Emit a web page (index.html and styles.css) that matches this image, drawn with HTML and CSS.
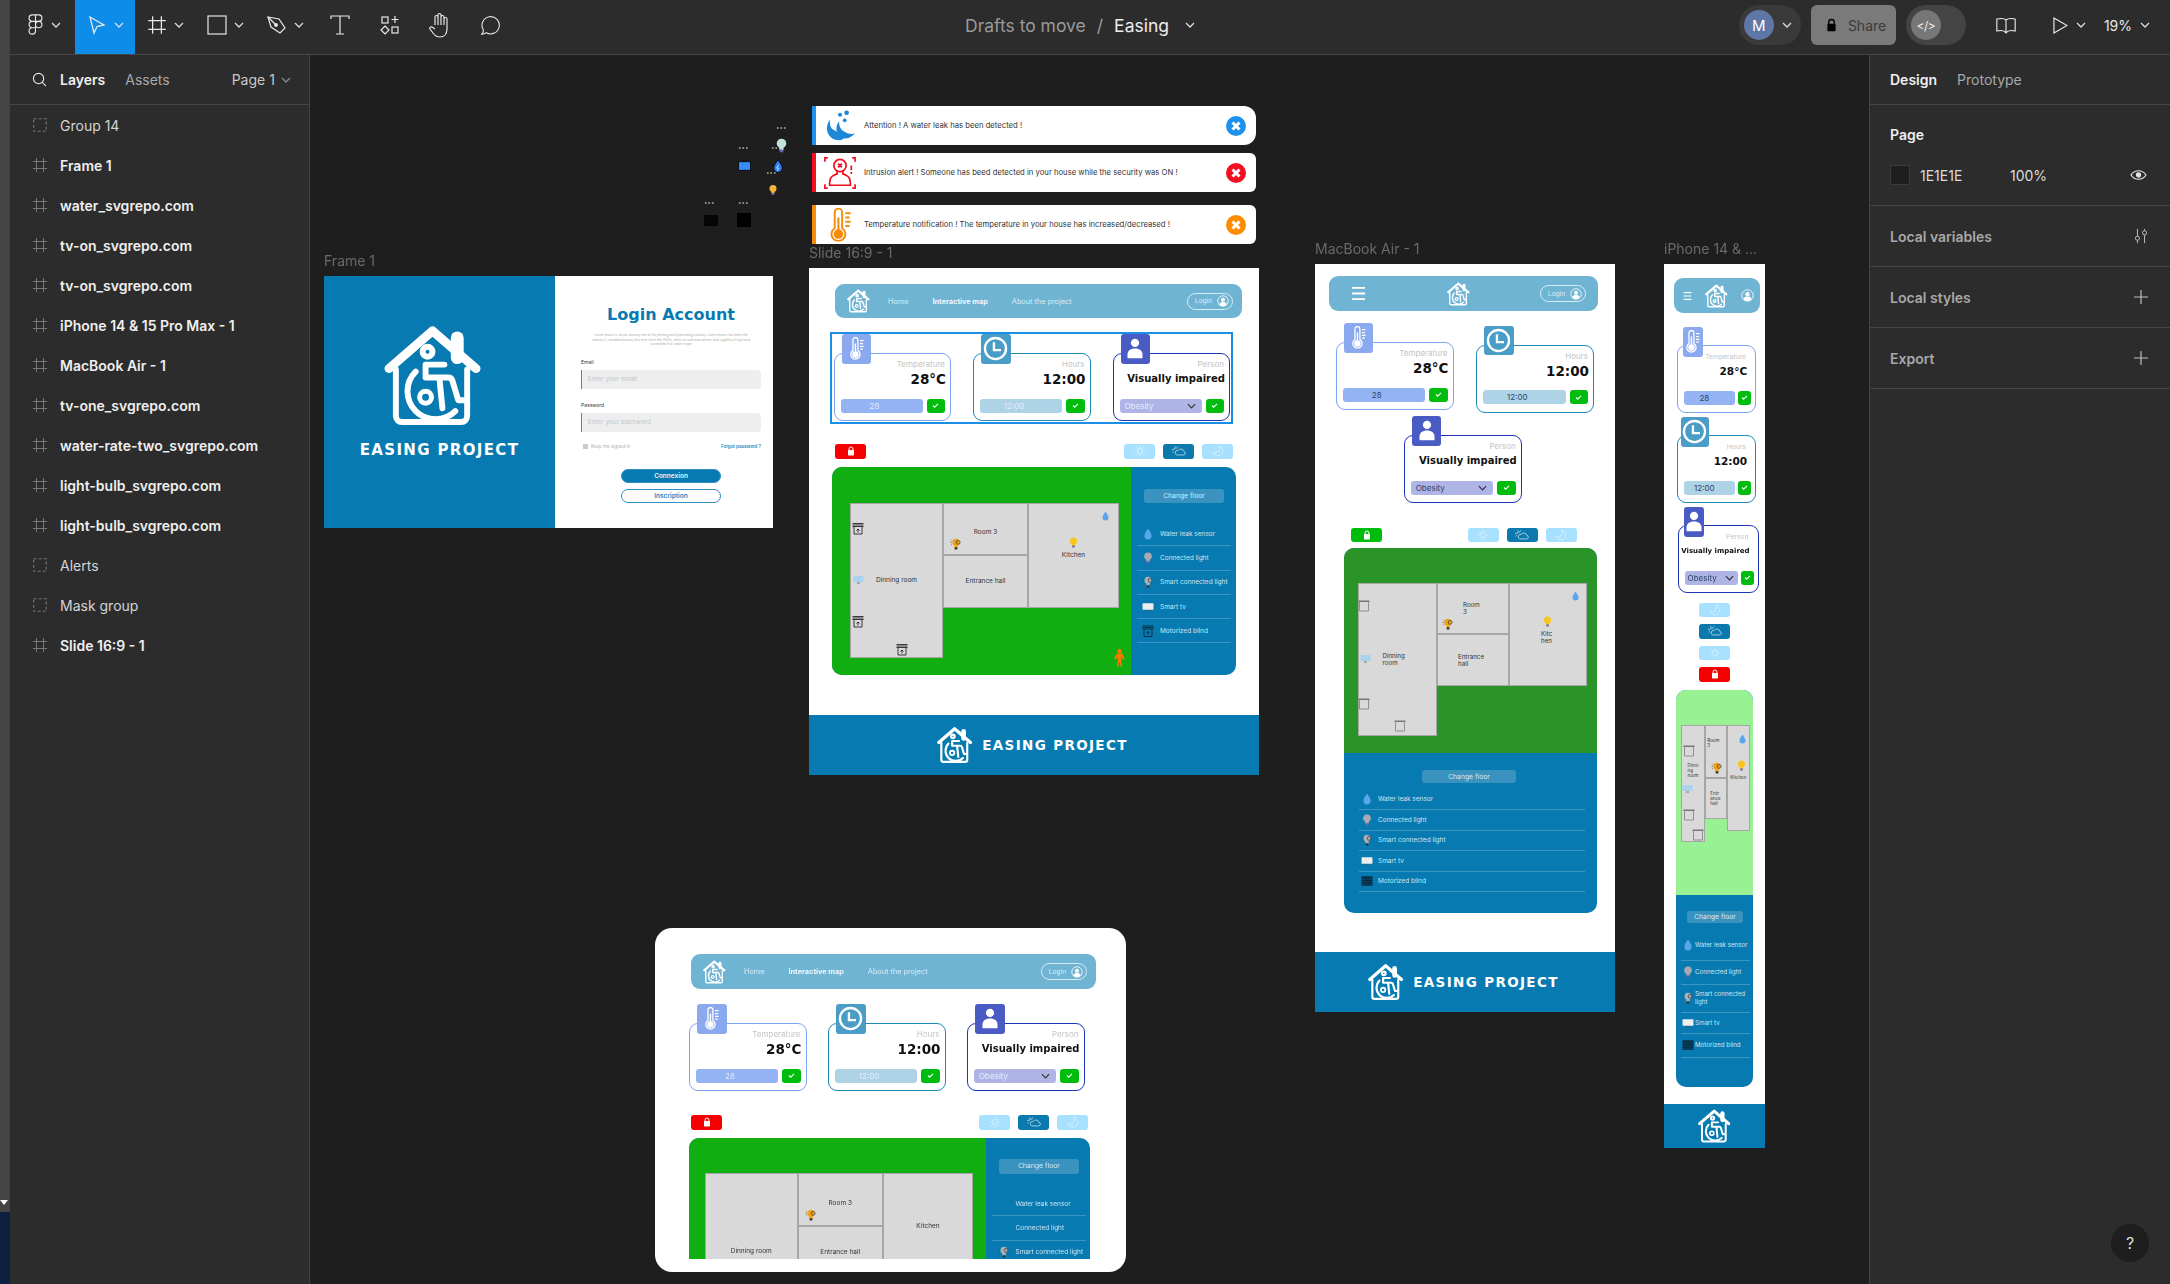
FILE: index.html
```html
<!DOCTYPE html>
<html lang="en">
  <head>
    <meta charset="UTF-8" />
    <title>Easing - Figma</title>
    <link rel="stylesheet" href="styles.css" />
  </head>
  <body>
    <!-- shared icons -->
    <svg class="sprite" aria-hidden="true">
      <symbol id="house" viewBox="0 0 100 100">
        <g fill="none" stroke="currentColor" stroke-linecap="round" stroke-linejoin="round">
          <path d="M5 43 49 5l44 38" stroke-width="9" />
          <path d="M74 12v20" stroke-width="13" />
          <path d="M12 44v47a6 6 0 0 0 6 6h60a6 6 0 0 0 6-6V44" stroke-width="6" />
          <circle cx="44" cy="26" r="5" stroke-width="6" />
          <path d="M42 39h19M42 39v13h23q3 0 4 3l6 20h6M56 53l3 30" stroke-width="6" />
          <path d="M32 46a26 26 0 0 0 40 40" stroke-width="6" />
          <circle cx="42" cy="72" r="6" stroke-width="5" />
        </g>
      </symbol>
      <symbol id="thermo" viewBox="0 0 24 32">
        <g fill="none" stroke="currentColor" stroke-width="1.8">
          <path d="M7 4a3.5 3.5 0 0 1 7 0v15a6.5 6.5 0 1 1-7 0z" />
          <path d="M17 5h5M17 9h4M17 13h5M17 17h4" />
        </g>
        <circle cx="10.5" cy="24.5" r="4.5" fill="currentColor" />
        <path d="M10.5 9v14" stroke="currentColor" stroke-width="2" />
      </symbol>
      <symbol id="clock" viewBox="0 0 32 32">
        <circle cx="16" cy="16" r="13.5" fill="none" stroke="currentColor" stroke-width="3" />
        <path d="M14 8v10h9" fill="none" stroke="currentColor" stroke-width="3" />
      </symbol>
      <symbol id="person" viewBox="0 0 24 28">
        <circle cx="12" cy="6.5" r="5.5" fill="currentColor" />
        <path d="M2 27v-5c0-5 4-8 10-8s10 3 10 8v5z" fill="currentColor" />
      </symbol>
      <symbol id="check" viewBox="0 0 16 16">
        <path d="m3.5 8 3 3 6-6" fill="none" stroke="currentColor" stroke-width="2" />
      </symbol>
      <symbol id="padlock" viewBox="0 0 16 20">
        <path d="M4 9V6a4 4 0 0 1 8 0v3" fill="none" stroke="currentColor" stroke-width="2" />
        <rect x="2" y="8" width="12" height="11" rx="1.5" fill="currentColor" />
      </symbol>
      <symbol id="sun" viewBox="0 0 24 24">
        <g fill="none" stroke="currentColor" stroke-width="1.3">
          <circle cx="12" cy="12" r="5" />
          <path d="M12 1v4M12 19v4M1 12h4M19 12h4M4 4l3 3M17 17l3 3M4 20l3-3M17 7l3-3" />
        </g>
      </symbol>
      <symbol id="cloud" viewBox="0 0 32 24">
        <g fill="none" stroke="currentColor" stroke-width="1.4">
          <path d="M11 21h15a4 4 0 0 0 1-8 7 7 0 0 0-13-2 5 5 0 0 0-3 10z" />
          <path d="M4 10a5 5 0 0 1 8-4M6 1l1 3M0 8l3 1M14 1l-2 3M1 15l3-2" />
        </g>
      </symbol>
      <symbol id="moon" viewBox="0 0 24 24">
        <path d="M14 2a10 10 0 1 1-12 13c7 3 16-3 12-13z" fill="none" stroke="currentColor" stroke-width="1.3" />
      </symbol>
      <symbol id="drop" viewBox="0 0 14 20">
        <path d="M7 1c3 5 6 8 6 12a6 6 0 0 1-12 0c0-4 3-7 6-12z" fill="currentColor" />
      </symbol>
      <symbol id="bulb" viewBox="0 0 16 22">
        <circle cx="8" cy="8" r="7" fill="currentColor" />
        <rect x="5" y="13" width="6" height="5" fill="currentColor" />
        <rect x="5.5" y="17" width="5" height="4" fill="#6a64b0" />
      </symbol>
      <symbol id="smartbulb" viewBox="0 0 22 22">
        <circle cx="11" cy="8" r="6.5" fill="currentColor" />
        <rect x="8" y="13" width="6" height="5" fill="currentColor" />
        <rect x="8.5" y="17" width="5" height="4" fill="#333" />
        <circle cx="15" cy="8" r="3.5" fill="none" stroke="#444" stroke-width="1.5" />
        <path d="M1 8h3M2 3l2 2M2 13l2-2" stroke="#444" />
      </symbol>
      <symbol id="screen" viewBox="0 0 22 16">
        <rect x="1" y="1" width="20" height="12" rx="1" fill="currentColor" />
        <path d="M8 15h6" stroke="#555" stroke-width="1.5" />
      </symbol>
      <symbol id="blind" viewBox="0 0 24 24">
        <g fill="none" stroke="currentColor">
          <path d="M1 2h22M1 5h22M1 8h22" stroke-width="1.6" />
          <path d="M4 8v15h16V8" stroke-width="1.6" />
          <path d="M12 20v-7M9 16l3-3 3 3" stroke-width="1.6" />
        </g>
      </symbol>
      <symbol id="blindshut" viewBox="0 0 24 24">
        <rect x="1" y="2" width="22" height="20" fill="#0a3e5e" />
        <path d="M1 6h22M1 11h22M1 16h22" stroke="#052536" stroke-width="1.5" />
      </symbol>
      <symbol id="blindempty" viewBox="0 0 24 24">
        <path d="M1 2h22v3H1z" fill="currentColor" />
        <path d="M3 5v18h18V5" fill="none" stroke="currentColor" stroke-width="1.5" />
      </symbol>
      <symbol id="walker" viewBox="0 0 12 20">
        <circle cx="6" cy="2.5" r="2.5" fill="currentColor" />
        <path d="M3 5h6l3 6-1.5 1L8 9v4l1 7H7.5L6 14l-1.5 6H3l1-7V9l-2.5 3L0 11z" fill="currentColor" />
      </symbol>
      <symbol id="userround" viewBox="0 0 24 24">
        <circle cx="12" cy="12" r="10.5" fill="none" stroke="currentColor" stroke-width="1.6" />
        <circle cx="12" cy="9.5" r="4" fill="currentColor" />
        <path d="M4.5 19c1-4 4-5 7.5-5s6.5 1 7.5 5c-4 4-11 4-15 0z" fill="currentColor" />
      </symbol>
      <symbol id="burger" viewBox="0 0 16 16">
        <path d="M1 2h14M1 8h14M1 14h14" stroke="currentColor" stroke-width="2" />
      </symbol>
      <symbol id="chev" viewBox="0 0 10 6">
        <path d="m1 1 4 4 4-4" fill="none" stroke="currentColor" stroke-width="1.3" />
      </symbol>
      <symbol id="framegrid" viewBox="0 0 16 16">
        <path d="M4.5 1v14M11.5 1v14M1 4.5h14M1 11.5h14" stroke="currentColor" />
      </symbol>
      <symbol id="groupdash" viewBox="0 0 14 14">
        <path d="M1.5 1.5h11v11h-11z" fill="none" stroke="currentColor" stroke-dasharray="2.5 2" />
      </symbol>
      <symbol id="plus" viewBox="0 0 16 16">
        <path d="M8 1v14M1 8h14" stroke="currentColor" stroke-width="1.2" />
      </symbol>
      <symbol id="xmark" viewBox="0 0 20 20">
        <circle cx="10" cy="10" r="10" fill="currentColor" />
        <path d="m6.5 6.5 7 7M13.5 6.5l-7 7" stroke="#fff" stroke-width="3" />
      </symbol>
    </svg>

    <div class="edge"><span class="edge__arrow"></span></div>

    <div class="app">
      <header class="toolbar">
        <div class="tools">
          <button class="tool tool--logo">
            <svg class="tool__icon tool__icon--logo" viewBox="0 0 16 24" fill="none" stroke="currentColor" stroke-width="1.2">
              <path d="M8 1H4.500a3.500 3.500 0 0 0 0 7H8zM8 1h3.500a3.500 3.500 0 0 1 0 7H8zM8 8H4.500a3.500 3.500 0 0 0 0 7H8zM8 15H4.500A3.500 3.500 0 1 0 8 18.500z" />
              <circle cx="11.5" cy="11.5" r="3.5" />
            </svg>
            <svg class="chev"><use href="#chev" /></svg>
          </button>
          <button class="tool tool--wide tool--active">
            <svg class="tool__icon" viewBox="0 0 20 20" fill="none" stroke="currentColor" stroke-width="1.3">
              <path d="m3 2 14 8-7 1.500L7 18z" />
            </svg>
            <svg class="chev"><use href="#chev" /></svg>
          </button>
          <button class="tool tool--wide">
            <svg class="tool__icon"><use href="#framegrid" /></svg>
            <svg class="chev"><use href="#chev" /></svg>
          </button>
          <button class="tool tool--wide">
            <svg class="tool__icon" viewBox="0 0 20 20" fill="none" stroke="currentColor" stroke-width="1.2"><rect x="1" y="1" width="18" height="18" /></svg>
            <svg class="chev"><use href="#chev" /></svg>
          </button>
          <button class="tool tool--wide">
            <svg class="tool__icon" viewBox="0 0 20 20" fill="none" stroke="currentColor" stroke-width="1.2">
              <path d="m1 2 11 2 6 9-5 5-9-6z" /><path d="m1 2 7 7" /><circle cx="9" cy="10" r="1.3" fill="currentColor" />
            </svg>
            <svg class="chev"><use href="#chev" /></svg>
          </button>
          <button class="tool">
            <svg class="tool__icon" viewBox="0 0 20 20" fill="none" stroke="currentColor" stroke-width="1.2"><path d="M1 4V1h18v3M10 1v18M6 19h8" /></svg>
          </button>
          <button class="tool">
            <svg class="tool__icon" viewBox="0 0 20 20" fill="none" stroke="currentColor" stroke-width="1.2">
              <rect x="2" y="2" width="6" height="6" /><path d="M15 1v7M11.5 4.500h7" />
              <rect x="12" y="12" width="6" height="6" /><path d="m5 11 4 4-4 4-4-4z" />
            </svg>
          </button>
          <button class="tool">
            <svg class="tool__icon tool__icon--hand" viewBox="0 0 22 26" fill="none" stroke="currentColor" stroke-width="1.2">
              <path d="M6 13V5a1.500 1.500 0 0 1 3 0V3a1.500 1.500 0 0 1 3 0v2a1.500 1.500 0 0 1 3 0v2a1.500 1.500 0 0 1 3 0v10c0 5-3 8-7 8-3 0-5-1-7-4l-3-4a1.500 1.500 0 0 1 2-2l3 2M9 5v8M12 3v10M15 5v8" />
            </svg>
          </button>
          <button class="tool">
            <svg class="tool__icon" viewBox="0 0 22 22" fill="none" stroke="currentColor" stroke-width="1.2">
              <path d="M2 21c1-1 2-3 1.500-5A9.500 9.500 0 1 1 7 19.500c-1.500.5-3 1.500-5 1.500z" />
            </svg>
          </button>
        </div>

        <div class="crumbs">
          <span class="crumbs__folder">Drafts to move</span>
          <span class="crumbs__slash">/</span>
          <span class="crumbs__file">Easing</span>
          <svg class="chev"><use href="#chev" /></svg>
        </div>

        <div class="actions">
          <div class="pill">
            <span class="avatar">M</span>
            <svg class="chev"><use href="#chev" /></svg>
          </div>
          <div class="share">
            <svg class="share__lock"><use href="#padlock" /></svg>
            <span>Share</span>
          </div>
          <div class="pill pill--dev">
            <span class="dev-dot">&lt;/&gt;</span>
          </div>
          <svg class="action-icon action-icon--book" viewBox="0 0 24 18" fill="none" stroke="currentColor" stroke-width="1.2">
            <path d="M12 3c-2-2-6-2-10-1v13c4-1 8-1 10 2 2-3 6-3 10-2V2c-4-1-8-1-10 1zv14" />
          </svg>
          <svg class="action-icon action-icon--play" viewBox="0 0 16 18" fill="none" stroke="currentColor" stroke-width="1.2">
            <path d="M1 1v16l14-8z" />
          </svg>
          <svg class="chev chev--play"><use href="#chev" /></svg>
          <span class="zoom-level">19%</span>
          <svg class="chev"><use href="#chev" /></svg>
        </div>
      </header>

      <div class="workspace">
        <aside class="layers">
          <div class="layers__head">
            <svg class="layers__search" viewBox="0 0 16 16" fill="none" stroke="currentColor" stroke-width="1.2">
              <circle cx="7" cy="7" r="5.5" /><path d="m11 11 4 4" />
            </svg>
            <span class="layers__tab layers__tab--on">Layers</span>
            <span class="layers__tab">Assets</span>
            <span class="layers__page">Page 1</span>
            <svg class="chev chev--dim"><use href="#chev" /></svg>
          </div>
          <ul class="layers__list">
            <li class="layer"><svg class="layer__icon"><use href="#groupdash" /></svg>Group 14</li>
            <li class="layer layer--frame"><svg class="layer__icon"><use href="#framegrid" /></svg>Frame 1</li>
            <li class="layer layer--frame"><svg class="layer__icon"><use href="#framegrid" /></svg>water_svgrepo.com</li>
            <li class="layer layer--frame"><svg class="layer__icon"><use href="#framegrid" /></svg>tv-on_svgrepo.com</li>
            <li class="layer layer--frame"><svg class="layer__icon"><use href="#framegrid" /></svg>tv-on_svgrepo.com</li>
            <li class="layer layer--frame"><svg class="layer__icon"><use href="#framegrid" /></svg>iPhone 14 &amp; 15 Pro Max - 1</li>
            <li class="layer layer--frame"><svg class="layer__icon"><use href="#framegrid" /></svg>MacBook Air - 1</li>
            <li class="layer layer--frame"><svg class="layer__icon"><use href="#framegrid" /></svg>tv-one_svgrepo.com</li>
            <li class="layer layer--frame"><svg class="layer__icon"><use href="#framegrid" /></svg>water-rate-two_svgrepo.com</li>
            <li class="layer layer--frame"><svg class="layer__icon"><use href="#framegrid" /></svg>light-bulb_svgrepo.com</li>
            <li class="layer layer--frame"><svg class="layer__icon"><use href="#framegrid" /></svg>light-bulb_svgrepo.com</li>
            <li class="layer"><svg class="layer__icon"><use href="#groupdash" /></svg>Alerts</li>
            <li class="layer"><svg class="layer__icon"><use href="#groupdash" /></svg>Mask group</li>
            <li class="layer layer--frame"><svg class="layer__icon"><use href="#framegrid" /></svg>Slide 16:9 - 1</li>
          </ul>
        </aside>

        <main class="canvas">
          <!-- stray svgrepo frames -->
          <span class="stray-dots stray-dots--a"></span>
          <span class="stray-dots stray-dots--b"></span>
          <span class="stray-dots stray-dots--c"></span>
          <span class="stray-dots stray-dots--d"></span>
          <span class="stray-dots stray-dots--e"></span>
          <span class="stray-dots stray-dots--f"></span>
          <svg class="stray stray--lightbulb"><use href="#bulb" /></svg>
          <svg class="stray stray--tv" viewBox="0 0 16 14">
            <path d="M4 0l4 3 3-3" fill="none" stroke="#000" />
            <rect x="0.5" y="3" width="15" height="10.5" fill="#3a8cf0" stroke="#000" />
          </svg>
          <svg class="stray stray--drop" viewBox="0 0 14 20">
            <path d="M7 1c3 5 6 8 6 12a6 6 0 0 1-12 0c0-4 3-7 6-12z" fill="#2f7df0" stroke="#000" />
            <path d="M8 8 5 13h3l-2 4" fill="none" stroke="#fff" />
          </svg>
          <svg class="stray stray--bulb"><use href="#bulb" /></svg>
          <span class="stray stray--tvoff"></span>
          <span class="stray stray--black"></span>

          <section class="frame frame--login">
            <p class="frame-label">Frame 1</p>
            <div class="login__brand">
              <svg class="login__logo"><use href="#house" /></svg>
              <p class="login__name">EASING PROJECT</p>
            </div>
            <form class="login__form">
              <h1 class="login__title">Login Account</h1>
              <p class="login__lorem">Lorem Ipsum is simply dummy text of the printing and typesetting industry. Lorem Ipsum has been the industry's standard dummy text ever since the 1500s, when an unknown printer took a galley of type and scrambled it to make a type</p>
              <label class="login__label">Email</label>
              <div class="login__input">Enter your email</div>
              <label class="login__label login__label--second">Password</label>
              <div class="login__input">Enter your password</div>
              <div class="login__meta">
                <span class="login__box"></span>
                <span class="login__keep">Keep me signed in</span>
                <span class="login__forgot">Forgot password ?</span>
              </div>
              <div class="login__btn login__btn--main">Connexion</div>
              <div class="login__btn">Inscription</div>
            </form>
          </section>

          <section class="alerts">
            <div class="alert alert--water">
              <svg class="alert__icon" viewBox="0 0 34 34">
                <path d="M14 32C4 30 0 20 6 10c0 8 2 10 6 12 4 3 8 5 14 4-4 4-8 7-12 6z" fill="#1e88d8" />
                <path d="M22 30c-8-2-12-10-6-18 0 7 3 10 6 11 3 2 7 3 11 2-3 3-7 6-11 5z" fill="#1e88d8" />
                <circle cx="17" cy="5" r="2.2" fill="#1e88d8" /><circle cx="24" cy="3" r="2.5" fill="#1e88d8" /><circle cx="22" cy="11" r="2" fill="#1e88d8" />
              </svg>
              <p class="alert__text">Attention ! A water leak has been detected !</p>
              <svg class="alert__close"><use href="#xmark" /></svg>
            </div>
            <div class="alert alert--intrusion">
              <svg class="alert__icon" viewBox="0 0 34 34" fill="none" stroke="#f00d1d" stroke-width="1.8">
                <path d="M1 5V1h3M33 5V1h-3M1 29v4h3M33 29v4h-3M29 9v5M29 16v2" />
                <circle cx="17" cy="9" r="6.5" />
                <path d="M14 14v4c-3 1-8 2-8 9v3h22v-3c0-7-5-8-8-9v-4" />
                <path d="m15 7 4 4M19 7l-4 4" />
              </svg>
              <p class="alert__text">Intrusion alert ! Someone has beed detected in your house while the security was ON !</p>
              <svg class="alert__close"><use href="#xmark" /></svg>
            </div>
            <div class="alert alert--heat">
              <svg class="alert__icon"><use href="#thermo" /></svg>
              <p class="alert__text">Temperature notification ! The temperature in your house has increased/decreased !</p>
              <svg class="alert__close"><use href="#xmark" /></svg>
            </div>
          </section>

          <!-- desktop slide -->
          <section class="frame frame--slide">
            <p class="frame-label">Slide 16:9 - 1</p>
            <nav class="app-nav">
              <svg class="app-nav__logo"><use href="#house" /></svg>
              <a class="app-nav__link">Home</a>
              <a class="app-nav__link app-nav__link--on">Interactive map</a>
              <a class="app-nav__link">About the project</a>
              <span class="login-pill">Login <svg class="login-pill__icon"><use href="#userround" /></svg></span>
            </nav>
            <div class="stats stats--selected">
              <article class="stat stat--temp">
                <span class="stat__badge"><svg class="stat__glyph stat__glyph--thermo"><use href="#thermo" /></svg></span>
                <p class="stat__label">Temperature</p>
                <p class="stat__value">28°C</p>
                <div class="stat__form"><span class="stat__field">28</span><span class="stat__ok"><svg><use href="#check" /></svg></span></div>
              </article>
              <article class="stat stat--time">
                <span class="stat__badge"><svg class="stat__glyph"><use href="#clock" /></svg></span>
                <p class="stat__label">Hours</p>
                <p class="stat__value">12:00</p>
                <div class="stat__form"><span class="stat__field">12:00</span><span class="stat__ok"><svg><use href="#check" /></svg></span></div>
              </article>
              <article class="stat stat--person">
                <span class="stat__badge"><svg class="stat__glyph stat__glyph--person"><use href="#person" /></svg></span>
                <p class="stat__label">Person</p>
                <p class="stat__value stat__value--text">Visually impaired</p>
                <div class="stat__form"><span class="stat__field stat__field--select">Obesity<svg class="chev"><use href="#chev" /></svg></span><span class="stat__ok"><svg><use href="#check" /></svg></span></div>
              </article>
            </div>
            <div class="controls">
              <span class="lock lock--on"><svg><use href="#padlock" /></svg></span>
              <div class="modes">
                <span class="mode"><svg><use href="#sun" /></svg></span>
                <span class="mode mode--on"><svg><use href="#cloud" /></svg></span>
                <span class="mode"><svg><use href="#moon" /></svg></span>
              </div>
            </div>
            <div class="house">
              <div class="yard">
                <div class="plan">
                  <div class="room room--dining"><span class="room__name">Dinning room</span></div>
                  <div class="room room--three"><span class="room__name">Room 3</span></div>
                  <div class="room room--hall"><span class="room__name">Entrance hall</span></div>
                  <div class="room room--kitchen"><span class="room__name">Kitchen</span></div>
                </div>
                <svg class="pin pin--blind pin--blind-a"><use href="#blind" /></svg>
                <svg class="pin pin--blind pin--blind-b"><use href="#blind" /></svg>
                <svg class="pin pin--blind pin--blind-c"><use href="#blind" /></svg>
                <svg class="pin pin--tv"><use href="#screen" /></svg>
                <svg class="pin pin--spot"><use href="#smartbulb" /></svg>
                <svg class="pin pin--bulb"><use href="#bulb" /></svg>
                <svg class="pin pin--drop"><use href="#drop" /></svg>
                <svg class="pin pin--walker"><use href="#walker" /></svg>
              </div>
              <aside class="legend">
                <span class="legend__floor">Change floor</span>
                <ul class="legend__list">
                  <li class="legend__item"><span class="legend__slot legend__slot--drop"><svg><use href="#drop" /></svg></span>Water leak sensor</li>
                  <li class="legend__item"><span class="legend__slot legend__slot--bulb"><svg><use href="#bulb" /></svg></span>Connected light</li>
                  <li class="legend__item"><span class="legend__slot legend__slot--spot"><svg><use href="#smartbulb" /></svg></span>Smart connected light</li>
                  <li class="legend__item"><span class="legend__slot legend__slot--tv"><svg><use href="#screen" /></svg></span>Smart tv</li>
                  <li class="legend__item"><span class="legend__slot legend__slot--blind"><svg><use href="#blind" /></svg></span>Motorized blind</li>
                </ul>
              </aside>
            </div>
            <footer class="brand">
              <svg class="brand__logo"><use href="#house" /></svg>
              <span class="brand__name">EASING PROJECT</span>
            </footer>
          </section>

          <!-- macbook -->
          <section class="frame frame--mac">
            <p class="frame-label">MacBook Air - 1</p>
            <nav class="app-nav">
              <svg class="app-nav__burger"><use href="#burger" /></svg>
              <svg class="app-nav__logo"><use href="#house" /></svg>
              <span class="login-pill">Login <svg class="login-pill__icon"><use href="#userround" /></svg></span>
            </nav>
            <div class="stats">
              <article class="stat stat--temp">
                <span class="stat__badge"><svg class="stat__glyph stat__glyph--thermo"><use href="#thermo" /></svg></span>
                <p class="stat__label">Temperature</p>
                <p class="stat__value">28°C</p>
                <div class="stat__form"><span class="stat__field">28</span><span class="stat__ok"><svg><use href="#check" /></svg></span></div>
              </article>
              <article class="stat stat--time">
                <span class="stat__badge"><svg class="stat__glyph"><use href="#clock" /></svg></span>
                <p class="stat__label">Hours</p>
                <p class="stat__value">12:00</p>
                <div class="stat__form"><span class="stat__field">12:00</span><span class="stat__ok"><svg><use href="#check" /></svg></span></div>
              </article>
              <article class="stat stat--person">
                <span class="stat__badge"><svg class="stat__glyph stat__glyph--person"><use href="#person" /></svg></span>
                <p class="stat__label">Person</p>
                <p class="stat__value stat__value--text">Visually impaired</p>
                <div class="stat__form"><span class="stat__field stat__field--select">Obesity<svg class="chev"><use href="#chev" /></svg></span><span class="stat__ok"><svg><use href="#check" /></svg></span></div>
              </article>
            </div>
            <div class="controls">
              <span class="lock"><svg><use href="#padlock" /></svg></span>
              <div class="modes">
                <span class="mode"><svg><use href="#sun" /></svg></span>
                <span class="mode mode--on"><svg><use href="#cloud" /></svg></span>
                <span class="mode"><svg><use href="#moon" /></svg></span>
              </div>
            </div>
            <div class="house">
              <div class="yard">
                <div class="plan">
                  <div class="room room--dining"><span class="room__name">Dinning room</span></div>
                  <div class="room room--three"><span class="room__name">Room 3</span></div>
                  <div class="room room--hall"><span class="room__name">Entrance hall</span></div>
                  <div class="room room--kitchen"><span class="room__name">Kitchen</span></div>
                </div>
                <svg class="pin pin--blind pin--blind-a"><use href="#blindempty" /></svg>
                <svg class="pin pin--blind pin--blind-b"><use href="#blindempty" /></svg>
                <svg class="pin pin--blind pin--blind-c"><use href="#blindempty" /></svg>
                <svg class="pin pin--tv"><use href="#screen" /></svg>
                <svg class="pin pin--spot"><use href="#smartbulb" /></svg>
                <svg class="pin pin--bulb"><use href="#bulb" /></svg>
                <svg class="pin pin--drop"><use href="#drop" /></svg>
              </div>
              <aside class="legend">
                <span class="legend__floor">Change floor</span>
                <ul class="legend__list">
                  <li class="legend__item"><span class="legend__slot legend__slot--drop"><svg><use href="#drop" /></svg></span>Water leak sensor</li>
                  <li class="legend__item"><span class="legend__slot legend__slot--bulb"><svg><use href="#bulb" /></svg></span>Connected light</li>
                  <li class="legend__item"><span class="legend__slot legend__slot--spot"><svg><use href="#smartbulb" /></svg></span>Smart connected light</li>
                  <li class="legend__item"><span class="legend__slot legend__slot--tv"><svg><use href="#screen" /></svg></span>Smart tv</li>
                  <li class="legend__item"><span class="legend__slot legend__slot--shut"><svg><use href="#blindshut" /></svg></span>Motorized blind</li>
                </ul>
              </aside>
            </div>
            <footer class="brand">
              <svg class="brand__logo"><use href="#house" /></svg>
              <span class="brand__name">EASING PROJECT</span>
            </footer>
          </section>

          <!-- phone -->
          <section class="frame frame--phone">
            <p class="frame-label">iPhone 14 &amp; ...</p>
            <nav class="app-nav">
              <svg class="app-nav__burger"><use href="#burger" /></svg>
              <svg class="app-nav__logo"><use href="#house" /></svg>
              <svg class="app-nav__user"><use href="#userround" /></svg>
            </nav>
            <div class="stats">
              <article class="stat stat--temp">
                <span class="stat__badge"><svg class="stat__glyph stat__glyph--thermo"><use href="#thermo" /></svg></span>
                <p class="stat__label">Temperature</p>
                <p class="stat__value">28°C</p>
                <div class="stat__form"><span class="stat__field">28</span><span class="stat__ok"><svg><use href="#check" /></svg></span></div>
              </article>
              <article class="stat stat--time">
                <span class="stat__badge"><svg class="stat__glyph"><use href="#clock" /></svg></span>
                <p class="stat__label">Hours</p>
                <p class="stat__value">12:00</p>
                <div class="stat__form"><span class="stat__field">12:00</span><span class="stat__ok"><svg><use href="#check" /></svg></span></div>
              </article>
              <article class="stat stat--person">
                <span class="stat__badge"><svg class="stat__glyph stat__glyph--person"><use href="#person" /></svg></span>
                <p class="stat__label">Person</p>
                <p class="stat__value stat__value--text">Visually impaired</p>
                <div class="stat__form"><span class="stat__field stat__field--select">Obesity<svg class="chev"><use href="#chev" /></svg></span><span class="stat__ok"><svg><use href="#check" /></svg></span></div>
              </article>
            </div>
            <div class="controls">
              <span class="lock lock--on"><svg><use href="#padlock" /></svg></span>
              <div class="modes">
                <span class="mode"><svg><use href="#sun" /></svg></span>
                <span class="mode mode--on"><svg><use href="#cloud" /></svg></span>
                <span class="mode"><svg><use href="#moon" /></svg></span>
              </div>
            </div>
            <div class="house">
              <div class="yard">
                <div class="plan">
                  <div class="room room--dining"><span class="room__name">Dinning room</span></div>
                  <div class="room room--three"><span class="room__name">Room 3</span></div>
                  <div class="room room--hall"><span class="room__name">Entrance hall</span></div>
                  <div class="room room--kitchen"><span class="room__name">Kitchen</span></div>
                </div>
                <svg class="pin pin--blind pin--blind-a"><use href="#blindempty" /></svg>
                <svg class="pin pin--blind pin--blind-b"><use href="#blindempty" /></svg>
                <svg class="pin pin--blind pin--blind-c"><use href="#blindempty" /></svg>
                <svg class="pin pin--tv"><use href="#screen" /></svg>
                <svg class="pin pin--spot"><use href="#smartbulb" /></svg>
                <svg class="pin pin--bulb"><use href="#bulb" /></svg>
                <svg class="pin pin--drop"><use href="#drop" /></svg>
              </div>
              <aside class="legend">
                <span class="legend__floor">Change floor</span>
                <ul class="legend__list">
                  <li class="legend__item"><span class="legend__slot legend__slot--drop"><svg><use href="#drop" /></svg></span>Water leak sensor</li>
                  <li class="legend__item"><span class="legend__slot legend__slot--bulb"><svg><use href="#bulb" /></svg></span>Connected light</li>
                  <li class="legend__item"><span class="legend__slot legend__slot--spot"><svg><use href="#smartbulb" /></svg></span>Smart connected light</li>
                  <li class="legend__item"><span class="legend__slot legend__slot--tv"><svg><use href="#screen" /></svg></span>Smart tv</li>
                  <li class="legend__item"><span class="legend__slot legend__slot--shut"><svg><use href="#blindshut" /></svg></span>Motorized blind</li>
                </ul>
              </aside>
            </div>
            <footer class="brand">
              <svg class="brand__logo"><use href="#house" /></svg>
            </footer>
          </section>

          <!-- mask group -->
          <section class="frame frame--mask">
            <nav class="app-nav">
              <svg class="app-nav__logo"><use href="#house" /></svg>
              <a class="app-nav__link">Home</a>
              <a class="app-nav__link app-nav__link--on">Interactive map</a>
              <a class="app-nav__link">About the project</a>
              <span class="login-pill">Login <svg class="login-pill__icon"><use href="#userround" /></svg></span>
            </nav>
            <div class="stats">
              <article class="stat stat--temp">
                <span class="stat__badge"><svg class="stat__glyph stat__glyph--thermo"><use href="#thermo" /></svg></span>
                <p class="stat__label">Temperature</p>
                <p class="stat__value">28°C</p>
                <div class="stat__form"><span class="stat__field">28</span><span class="stat__ok"><svg><use href="#check" /></svg></span></div>
              </article>
              <article class="stat stat--time">
                <span class="stat__badge"><svg class="stat__glyph"><use href="#clock" /></svg></span>
                <p class="stat__label">Hours</p>
                <p class="stat__value">12:00</p>
                <div class="stat__form"><span class="stat__field">12:00</span><span class="stat__ok"><svg><use href="#check" /></svg></span></div>
              </article>
              <article class="stat stat--person">
                <span class="stat__badge"><svg class="stat__glyph stat__glyph--person"><use href="#person" /></svg></span>
                <p class="stat__label">Person</p>
                <p class="stat__value stat__value--text">Visually impaired</p>
                <div class="stat__form"><span class="stat__field stat__field--select">Obesity<svg class="chev"><use href="#chev" /></svg></span><span class="stat__ok"><svg><use href="#check" /></svg></span></div>
              </article>
            </div>
            <div class="controls">
              <span class="lock lock--on"><svg><use href="#padlock" /></svg></span>
              <div class="modes">
                <span class="mode"><svg><use href="#sun" /></svg></span>
                <span class="mode mode--on"><svg><use href="#cloud" /></svg></span>
                <span class="mode"><svg><use href="#moon" /></svg></span>
              </div>
            </div>
            <div class="house">
              <div class="yard">
                <div class="plan">
                  <div class="room room--dining"><span class="room__name">Dinning room</span></div>
                  <div class="room room--three"><span class="room__name">Room 3</span></div>
                  <div class="room room--hall"><span class="room__name">Entrance hall</span></div>
                  <div class="room room--kitchen"><span class="room__name">Kitchen</span></div>
                </div>
                <svg class="pin pin--spot"><use href="#smartbulb" /></svg>
              </div>
              <aside class="legend">
                <span class="legend__floor">Change floor</span>
                <ul class="legend__list">
                  <li class="legend__item"><span class="legend__slot"></span>Water leak sensor</li>
                  <li class="legend__item"><span class="legend__slot"></span>Connected light</li>
                  <li class="legend__item"><span class="legend__slot legend__slot--spot"><svg><use href="#smartbulb" /></svg></span>Smart connected light</li>
                </ul>
              </aside>
            </div>
          </section>
        </main>

        <aside class="inspector">
          <div class="inspector__tabs">
            <span class="inspector__tab inspector__tab--on">Design</span>
            <span class="inspector__tab">Prototype</span>
          </div>
          <div class="inspector__page">
            <h2 class="inspector__title">Page</h2>
            <div class="inspector__fill">
              <span class="swatch"></span>
              <span class="inspector__hex">1E1E1E</span>
              <span class="inspector__pct">100%</span>
              <svg class="inspector__eye" viewBox="0 0 18 12" fill="none" stroke="currentColor" stroke-width="1.2">
                <path d="M1 6c4-6 12-6 16 0-4 6-12 6-16 0z" /><circle cx="9" cy="6" r="2.2" fill="currentColor" />
              </svg>
            </div>
          </div>
          <div class="inspector__row">
            <span>Local variables</span>
            <svg class="inspector__icon" viewBox="0 0 16 18" fill="none" stroke="currentColor" stroke-width="1.1">
              <path d="M4 1v8M4 14v3M12 1v2M12 8v9" /><circle cx="4" cy="11.5" r="2.3" /><circle cx="12" cy="5.5" r="2.3" />
            </svg>
          </div>
          <div class="inspector__row">
            <span>Local styles</span>
            <svg class="inspector__icon"><use href="#plus" /></svg>
          </div>
          <div class="inspector__row">
            <span>Export</span>
            <svg class="inspector__icon"><use href="#plus" /></svg>
          </div>
        </aside>
      </div>
    </div>

    <button class="help">?</button>
  </body>
</html>
```

FILE: styles.css
```css
* {
  margin: 0;
  padding: 0;
  box-sizing: border-box;
}

html,
body {
  width: 2170px;
  height: 1284px;
  overflow: hidden;
}

body {
  position: relative;
  display: flex;
  background-color: #1e1e1e;
  color: #e6e6e6;
  font-family: Inter, "Liberation Sans", sans-serif;
  font-size: 14px;
}

button {
  border: 0;
  background: none;
  color: inherit;
  font: inherit;
}

ul {
  list-style: none;
}

.sprite {
  display: none;
}

.chev {
  width: 10px;
  height: 6px;
  color: #ddd;
  flex-shrink: 0;
}

.chev--dim {
  color: #8a8a8a;
}

/* left scroll strip */
.edge {
  width: 10px;
  flex-shrink: 0;
  height: 100%;
  background: linear-gradient(#444 0 1212px, #0f1f3e 1212px);
  position: relative;
}

.edge__arrow {
  position: absolute;
  top: 1200px;
  left: 0;
  border: 4px solid transparent;
  border-top: 5px solid #fff;
  border-bottom: 0;
}

.app {
  flex: 1;
  display: flex;
  flex-direction: column;
  min-width: 0;
}

/* toolbar */
.toolbar {
  height: 55px;
  flex-shrink: 0;
  display: flex;
  align-items: center;
  background-color: #2c2c2c;
  border-bottom: 1px solid #444;
}

.tools {
  display: flex;
  height: 54px;
}

.tool {
  width: 50px;
  height: 54px;
  padding-bottom: 4px;
  display: flex;
  align-items: center;
  justify-content: center;
  gap: 7px;
}

.tool--logo {
  width: 65px;
  justify-content: flex-start;
  padding-left: 18px;
  gap: 8px;
}

.tool--wide {
  width: 60px;
}

.tool--active {
  background-color: #0d8ce9;
}

.tool__icon {
  width: 20px;
  height: 20px;
  color: #e8e8e8;
}

.tool__icon--logo {
  width: 15px;
  height: 22px;
}

.tool__icon--hand {
  width: 22px;
  height: 26px;
}

.crumbs {
  margin: 0 0 4px 450px;
  display: flex;
  align-items: center;
  gap: 11px;
  font-size: 17.5px;
}

.crumbs__folder,
.crumbs__slash {
  color: #9a9a9a;
}

.crumbs__file {
  color: #ececec;
}

.crumbs .chev {
  margin-left: 5px;
}

.actions {
  margin: 0 0 4px auto;
  padding-right: 20px;
  display: flex;
  align-items: center;
}

.pill {
  width: 62px;
  height: 40px;
  border-radius: 20px;
  background-color: #3a3a3a;
  display: flex;
  align-items: center;
  gap: 8px;
  padding-left: 5px;
}

.pill--dev {
  width: 60px;
  background-color: #444;
  margin-left: 10px;
}

.avatar {
  width: 30px;
  height: 30px;
  border-radius: 50%;
  background-color: #5f77a6;
  color: #fff;
  display: flex;
  align-items: center;
  justify-content: center;
  font-size: 15px;
}

.dev-dot {
  width: 30px;
  height: 30px;
  border-radius: 50%;
  background-color: #777;
  color: #eee;
  display: flex;
  align-items: center;
  justify-content: center;
  font-size: 12px;
  letter-spacing: -0.5px;
}

.share {
  width: 85px;
  height: 40px;
  margin-left: 10px;
  border-radius: 6px;
  background-color: #7a7a7a;
  color: #3a3a3a;
  display: flex;
  align-items: center;
  gap: 11px;
  padding-left: 15px;
}

.share__lock {
  width: 11px;
  height: 14px;
  color: #000;
}

.action-icon {
  color: #eee;
}

.action-icon--book {
  width: 22px;
  height: 17px;
  margin-left: 29px;
}

.action-icon--play {
  width: 15px;
  height: 17px;
  margin-left: 36px;
}

.chev--play {
  margin-left: 8px;
}

.zoom-level {
  margin: 0 8px 0 18px;
  color: #e6e6e6;
}

/* layers panel */
.workspace {
  flex: 1;
  display: flex;
  min-height: 0;
}

.layers {
  width: 300px;
  flex-shrink: 0;
  background-color: #2c2c2c;
  border-right: 1px solid #444;
}

.layers__head {
  height: 50px;
  display: flex;
  align-items: center;
  padding-left: 22px;
  border-bottom: 1px solid #444;
  color: #a8a8a8;
  white-space: nowrap;
}

.layers__search {
  width: 15px;
  height: 15px;
  color: #e6e6e6;
  margin-right: 13px;
}

.layers__tab {
  margin-right: 20px;
}

.layers__tab--on {
  color: #f0f0f0;
  font-weight: 600;
}

.layers__page {
  margin-left: 42px;
  margin-right: 6px;
  color: #c8c8c8;
}

.layer {
  height: 40px;
  display: flex;
  align-items: center;
  gap: 12px;
  padding-left: 22px;
  color: #d4d4d4;
}

.layer--frame {
  color: #efefef;
  font-weight: 600;
}

.layer__icon {
  width: 16px;
  height: 16px;
  color: #777;
}

/* free canvas */
.canvas {
  flex: 1;
  position: relative;
  overflow: hidden;
  background-color: #1e1e1e;
}

.stray-dots {
  position: absolute;
  width: 10px;
  height: 2px;
  background-image: radial-gradient(circle, #8a8a8a 0 1px, transparent 1px);
  background-size: 3.5px 2px;
}

.stray-dots--a { left: 466px; top: 72px; }
.stray-dots--b { left: 428px; top: 92px; }
.stray-dots--c { left: 461px; top: 92px; }
.stray-dots--d { left: 456px; top: 117px; }
.stray-dots--e { left: 394px; top: 147px; }
.stray-dots--f { left: 428px; top: 147px; }

.stray {
  position: absolute;
}

.stray--lightbulb {
  left: 466px;
  top: 83px;
  width: 11px;
  height: 15px;
  color: #bfe3dc;
}

.stray--tv {
  left: 428px;
  top: 104px;
  width: 13px;
  height: 12px;
}

.stray--drop {
  left: 463px;
  top: 104px;
  width: 10px;
  height: 14px;
}

.stray--bulb {
  left: 459px;
  top: 129px;
  width: 8px;
  height: 12px;
  color: #f4b73a;
}

.stray--tvoff {
  left: 394px;
  top: 160px;
  width: 14px;
  height: 11px;
  background-color: #050505;
}

.stray--black {
  left: 427px;
  top: 158px;
  width: 14px;
  height: 14px;
  background-color: #000;
}

/* frames on the canvas */
.frame {
  position: absolute;
  background-color: #fff;
  color: #333;
  display: flex;
  flex-direction: column;
  filter: blur(0.3px);
}

.frame-label {
  position: absolute;
  left: 0;
  bottom: 100%;
  margin-bottom: 7px;
  color: #6a6a6a;
  font-size: 14px;
  white-space: nowrap;
}

.frame--login {
  left: 14px;
  top: 221px;
  width: 449px;
  height: 252px;
  flex-direction: row;
}

.frame--slide {
  left: 499px;
  top: 213px;
  width: 450px;
  height: 507px;
}

.frame--mac {
  left: 1005px;
  top: 209px;
  width: 300px;
  height: 748px;
}

.frame--phone {
  left: 1354px;
  top: 209px;
  width: 101px;
  height: 884px;
}

.frame--mask {
  left: 345px;
  top: 873px;
  width: 471px;
  height: 344px;
  border-radius: 17px;
}

/* login */
.login__brand {
  width: 231px;
  flex-shrink: 0;
  background-color: #077ab2;
  color: #fff;
  display: flex;
  flex-direction: column;
  align-items: center;
  justify-content: flex-start;
  padding-top: 49px;
}

.login__logo {
  width: 99px;
  height: 101px;
  margin-right: 12px;
}

.login__name {
  margin-top: 15px;
  font-family: "DejaVu Sans", sans-serif;
  font-size: 15px;
  font-weight: 700;
  letter-spacing: 1.35px;
  white-space: nowrap;
}

.login__form {
  flex: 1;
  padding: 29px 12px 0 26px;
  display: flex;
  flex-direction: column;
}

.login__title {
  height: 20px;
  text-align: center;
  color: #077ab2;
  font-family: "DejaVu Sans", sans-serif;
  font-size: 16px;
  line-height: 20px;
  font-weight: 700;
  white-space: nowrap;
}

.login__lorem {
  margin: 8px 10px 0;
  height: 15px;
  text-align: center;
  color: #aaa;
  font-size: 3.2px;
  line-height: 4.7px;
}

.login__label {
  margin-top: 11px;
  height: 11px;
  font-size: 5px;
  line-height: 7px;
  color: #333;
}

.login__label--second {
  margin-top: 13px;
}

.login__input {
  height: 19px;
  background-color: #eee;
  border-left: 1.5px solid #2f8fc4;
  border-radius: 0 4px 4px 0;
  padding-left: 5.5px;
  color: #c6c6c6;
  font-size: 6.5px;
  line-height: 19px;
}

.login__meta {
  margin-top: 11px;
  height: 7px;
  display: flex;
  align-items: center;
  font-size: 4.5px;
  color: #aaa;
}

.login__box {
  width: 5px;
  height: 5px;
  margin: 0 3px 0 2px;
  background-color: #ccc;
}

.login__forgot {
  margin-left: auto;
  color: #2389bf;
  font-weight: 600;
}

.login__btn {
  align-self: center;
  width: 100px;
  height: 14px;
  margin-top: 6px;
  border: 1px solid #2f8fc4;
  border-radius: 7px;
  color: #2389bf;
  font-size: 6.5px;
  font-weight: 600;
  line-height: 12px;
  text-align: center;
}

.login__btn--main {
  margin-top: 19px;
  background-color: #077ab2;
  color: #e8f4fa;
}

/* alerts */
.alerts {
  position: absolute;
  left: 502px;
  top: 51px;
  width: 444px;
  display: flex;
  flex-direction: column;
  gap: 8px;
}

.alert {
  height: 39px;
  background-color: #fff;
  border-left: 4.5px solid;
  border-radius: 0 6px 6px 0;
  display: flex;
  align-items: center;
  padding-left: 8px;
  padding-right: 10px;
  color: #333;
}

.alert--water {
  border-color: #1e90ee;
  border-radius: 0 12px 12px 0;
}

.alert--intrusion {
  border-color: #f30f1f;
}

.alert--heat {
  border-color: #f48b0b;
  margin-top: 5px;
}

.alert__icon {
  width: 32px;
  height: 34px;
  flex-shrink: 0;
}

.alert--heat .alert__icon {
  color: #f48b0b;
}

.alert__text {
  margin-left: 8px;
  font-size: 7.7px;
  white-space: nowrap;
  flex: 1;
}

.alert__close {
  width: 20px;
  height: 20px;
  flex-shrink: 0;
}

.alert--water .alert__close { color: #1e90ee; }
.alert--intrusion .alert__close { color: #f30f1f; }
.alert--heat .alert__close { color: #ff8c00; }

/* dashboard nav */
.app-nav {
  height: 35px;
  flex-shrink: 0;
  background-color: #70b4d4;
  border-radius: 9px;
  color: #fff;
  display: flex;
  align-items: center;
  padding: 0 9px 0 12px;
  gap: 18px;
}

.app-nav__logo {
  width: 23px;
  height: 24px;
  flex-shrink: 0;
}

.app-nav__burger {
  width: 15px;
  height: 15px;
}

.app-nav__user {
  width: 13px;
  height: 13px;
}

.app-nav__link {
  color: #d8edf6;
  font-size: 7.3px;
  margin-right: 6px;
  white-space: nowrap;
}

.app-nav__link--on {
  color: #eef8fc;
  font-weight: 700;
}

.login-pill {
  margin-left: auto;
  width: 46px;
  height: 17px;
  border: 1px solid #d7edf6;
  border-radius: 9px;
  display: flex;
  align-items: center;
  justify-content: space-between;
  padding: 0 3px 0 7px;
  color: #dcf0f8;
  font-size: 6.5px;
}

.login-pill__icon {
  width: 12px;
  height: 12px;
  color: #fff;
}

/* stat cards */
.stats {
  position: relative;
  display: grid;
  grid-template-columns: 117.5px 117.5px 117.5px;
  column-gap: 22px;
}

.stats--selected {
  width: 396.5px;
}

.stats--selected::after {
  content: "";
  position: absolute;
  left: -3.5px;
  top: -21px;
  right: -3px;
  bottom: -2.7px;
  border: 2.5px solid #1b8fe6;
  pointer-events: none;
}

.stat {
  position: relative;
  height: 68px;
  background-color: #fff;
  border: 1.5px solid;
  border-radius: 9px;
  display: flex;
  flex-direction: column;
  align-items: flex-end;
  padding: 6px 4px 7.5px 6px;
}

.stat--temp { border-color: #7ba4f0; }
.stat--time { border-color: #1f8ab8; }
.stat--person { border-color: #1c35b8; }

.stat__badge {
  position: absolute;
  left: 7px;
  top: -20px;
  width: 29.5px;
  height: 29.5px;
  border-radius: 3px;
  display: flex;
  align-items: center;
  justify-content: center;
  color: #fff;
}

.stat--temp .stat__badge { background-color: #8aa9ee; }
.stat--time .stat__badge { background-color: #4a9dc6; }
.stat--person .stat__badge { background-color: #4a5bc4; }

.stat__glyph {
  width: 25px;
  height: 25px;
}

.stat__glyph--thermo {
  width: 17px;
  height: 23px;
}

.stat__glyph--person {
  width: 18px;
  height: 21px;
}

.stat__label {
  height: 9px;
  margin-right: 1px;
  color: #c4c4c4;
  font-size: 8px;
  line-height: 9px;
}

.stat__value {
  height: 18px;
  margin-top: 1px;
  color: #111;
  font-family: "DejaVu Sans", sans-serif;
  font-size: 13.5px;
  font-weight: 700;
  line-height: 18px;
  white-space: nowrap;
}

.stat__value--text {
  font-size: 10px;
}

.stat__form {
  margin-top: auto;
  align-self: stretch;
  display: flex;
  gap: 4px;
  padding-right: 1px;
}

.stat__field {
  flex: 1;
  height: 14px;
  border-radius: 3px;
  color: #e4ecfb;
  font-size: 8px;
  line-height: 14px;
  text-align: center;
  display: flex;
  align-items: center;
  justify-content: center;
  padding-right: 14px;
}

.stat--temp .stat__field { background-color: #93b3f2; }
.stat--time .stat__field { background-color: #aed3e6; }
.stat--person .stat__field { background-color: #aeb4e6; }

.stat__field--select {
  justify-content: space-between;
  padding: 0 6px 0 5px;
}

.stat__field--select .chev {
  color: #333;
  width: 9px;
}

.stat__ok {
  width: 18.5px;
  height: 14px;
  flex-shrink: 0;
  border-radius: 3px;
  background-color: #00bc0d;
  color: #fff;
  display: flex;
  align-items: center;
  justify-content: center;
}

.stat__ok svg {
  width: 9px;
  height: 9px;
}

/* lock + day modes */
.controls {
  flex-shrink: 0;
  display: flex;
  justify-content: space-between;
  align-items: flex-end;
}

.lock {
  width: 31px;
  height: 14.5px;
  border-radius: 3px;
  background-color: #00bc0d;
  color: #fff;
  display: flex;
  align-items: center;
  justify-content: center;
}

.lock--on {
  background-color: #f30000;
}

.lock svg {
  width: 8px;
  height: 10px;
}

.modes {
  display: flex;
  gap: 8px;
}

.mode {
  width: 31px;
  height: 14.5px;
  border-radius: 3px;
  background-color: #a8e0ff;
  color: #e8f7ff;
  display: flex;
  align-items: center;
  justify-content: center;
}

.mode--on {
  background-color: #0b78ae;
  color: #fff;
}

.mode svg {
  width: 14px;
  height: 12px;
}

/* house map */
.house {
  flex-shrink: 0;
  display: flex;
  overflow: hidden;
  border-radius: 10px;
  background-color: #077ab2;
}

.yard {
  position: relative;
  flex: 1;
  background-color: #11ae11;
}

.plan {
  display: grid;
}

.room {
  background-color: #d9d9d9;
  border: 0.75px solid #a6a6a6;
  color: #333;
  display: flex;
  align-items: center;
  justify-content: center;
  font-size: 6.5px;
  min-width: 0;
  min-height: 0;
  overflow: hidden;
}

.room--dining {
  grid-column: 1;
  grid-row: 1 / -1;
}

.room--three {
  grid-column: 2;
  grid-row: 1;
}

.room--hall {
  grid-column: 2;
  grid-row: 2;
}

.room--kitchen {
  grid-column: 3;
  grid-row: 1 / 3;
}

.room--three .room__name {
  margin-top: 7px;
}

.room__name {
  overflow-wrap: anywhere;
}

/* things sitting on the floor plan */
.pin {
  position: absolute;
}

.pin--blind {
  width: 12px;
  height: 13px;
  color: #111;
}

.pin--tv {
  width: 11px;
  height: 9px;
  color: #a9d2ee;
}

.pin--spot {
  width: 12px;
  height: 12px;
  color: #f1a30e;
}

.pin--bulb {
  width: 9px;
  height: 11px;
  color: #f8c51a;
}

.pin--drop {
  width: 7px;
  height: 10px;
  color: #5aa6ee;
}

.pin--walker {
  width: 11px;
  height: 18px;
  color: #f47a00;
}

.legend {
  flex-shrink: 0;
  color: #cfe5f0;
  font-size: 6.5px;
}

.legend__floor {
  display: block;
  height: 14.5px;
  border-radius: 3px;
  background-color: #3a92bf;
  color: #d7eaf4;
  font-size: 6.8px;
  line-height: 14.5px;
  text-align: center;
}

.legend__item {
  height: 24.3px;
  display: flex;
  align-items: center;
  border-bottom: 0.75px solid #3a95c3;
  white-space: nowrap;
}

.legend__slot {
  width: 12px;
  height: 12px;
  flex-shrink: 0;
  display: flex;
  align-items: center;
  justify-content: center;
}

.legend__slot svg {
  width: 100%;
  height: 100%;
}

.legend__slot--drop { color: #5aa6ee; }
.legend__slot--bulb { color: #a9a9b4; }
.legend__slot--spot { color: #a9b0b8; }
.legend__slot--tv { color: #eee; }
.legend__slot--blind { color: #06202f; }

.legend__slot--shut svg {
  width: 14px;
  height: 14px;
}

.brand {
  margin-top: auto;
  height: 60px;
  flex-shrink: 0;
  padding-right: 3px;
  background-color: #077ab2;
  color: #fff;
  display: flex;
  align-items: center;
  justify-content: center;
  gap: 9px;
}

.brand__logo {
  width: 36px;
  height: 38px;
}

.brand__name {
  font-family: "DejaVu Sans", sans-serif;
  font-size: 13.5px;
  font-weight: 700;
  letter-spacing: 1.35px;
  white-space: nowrap;
}

/* slide */
.frame--slide .app-nav {
  margin: 16px 17px 0 26px;
  height: 34px;
}

.frame--slide .stats {
  margin: 35px 0 0 24.5px;
}

.frame--slide .controls {
  margin: 23px 26px 0 26px;
}

.frame--slide .house {
  margin: 8px 23px 0 23px;
  height: 208px;
}

.frame--slide .yard {
  padding: 36px 0 0 18px;
}

.frame--slide .plan {
  grid-template-columns: 93px 85px 91px;
  grid-template-rows: 52px 53px 50px;
}

.frame--slide .legend {
  width: 105px;
  padding: 22px 5px 0 6px;
}

.frame--slide .legend__floor {
  width: 80px;
  margin: 0 0 19px 7px;
}

.frame--slide .legend__item {
  padding-left: 5px;
  gap: 6px;
}

.frame--slide .pin--blind-a { left: 20px; top: 55px; }
.frame--slide .pin--blind-b { left: 20px; top: 148px; }
.frame--slide .pin--blind-c { left: 64px; top: 176px; }
.frame--slide .pin--tv { left: 21px; top: 108px; }
.frame--slide .pin--spot { left: 118px; top: 71px; }
.frame--slide .pin--bulb { left: 236.5px; top: 70.5px; }
.frame--slide .pin--drop { left: 270px; top: 44px; }
.frame--slide .pin--walker { left: 281.5px; top: 182px; }

/* macbook */
.frame--mac .app-nav {
  margin: 12px 17px 0 14px;
  justify-content: space-between;
  padding: 0 12px 0 22px;
}

.frame--mac .app-nav__logo {
  margin-left: 10px;
}

.frame--mac .login-pill {
  margin-left: 0;
}

.frame--mac .stats {
  margin: 31px 0 0 20.5px;
  grid-template-columns: 118px 118px;
  column-gap: 22.5px;
  row-gap: 22.5px;
}

.frame--mac .stat--time {
  margin-top: 2.5px;
}

.frame--mac .stat--person {
  grid-column: 1 / -1;
  justify-self: center;
  width: 118px;
  margin-right: 4px;
}

.frame--mac .stat__field,
.frame--phone .stat__field {
  color: #2d4468;
}

.frame--mac .controls {
  margin: 24.5px 38.5px 0 36px;
}

.frame--mac .house {
  margin: 5.5px 18px 0 29px;
  height: 365px;
  flex-direction: column;
  border-radius: 10px;
}

.frame--mac .yard {
  flex: none;
  height: 205px;
  padding: 35px 0 0 14px;
  background-color: #2a9428;
}

.frame--mac .plan {
  grid-template-columns: 79px 72px 78px;
  grid-template-rows: 51px 52px 50px;
}

.frame--mac .room {
  font-size: 6.2px;
}

.frame--mac .room--dining .room__name,
.frame--mac .room--hall .room__name {
  width: 30px;
  margin-top: 0;
}

.frame--mac .room--three .room__name {
  width: 20px;
  margin-top: 0;
}

.frame--mac .room--kitchen .room__name {
  width: 14px;
  margin-top: 6px;
}

.frame--mac .legend {
  padding: 17px 12px 0 15px;
}

.frame--mac .legend__floor {
  width: 94px;
  height: 13px;
  line-height: 13px;
  margin: 0 0 7px 63px;
}

.frame--mac .legend__item {
  height: 20.5px;
  padding-left: 2px;
  gap: 5px;
}

.frame--mac .pin--blind,
.frame--phone .pin--blind {
  color: #777;
}

.frame--mac .pin--blind-a { left: 14px; top: 51px; }
.frame--mac .pin--blind-b { left: 13.5px; top: 149px; }
.frame--mac .pin--blind-c { left: 49.5px; top: 171px; }
.frame--mac .pin--tv { left: 16px; top: 106.5px; }
.frame--mac .pin--spot { left: 98px; top: 70px; }
.frame--mac .pin--bulb { left: 199px; top: 68.5px; }
.frame--mac .pin--drop { left: 227.5px; top: 43px; }

/* phone */
.frame--phone .app-nav {
  margin: 14px 5.5px 0 9.5px;
  justify-content: space-between;
  padding: 0 6px 0 9px;
  gap: 0;
}

.frame--phone .app-nav__burger {
  width: 9px;
  height: 10px;
}

.frame--phone .stats {
  margin: 32px 0 0 12.6px;
  grid-template-columns: 79.5px;
  row-gap: 22px;
}

.frame--phone .stat {
  padding-right: 8px;
}

.frame--phone .stat__badge {
  left: 5px;
  width: 20px;
  top: -19px;
}

.frame--phone .stat--time .stat__badge {
  left: 3px;
  width: 28.5px;
}

.frame--phone .stat--person {
  width: 81px;
  margin-left: 1px;
}

.frame--phone .stat__label {
  font-size: 6.8px;
  margin-right: 1px;
}

.frame--phone .stat__value {
  font-size: 10.5px;
}

.frame--phone .stat__value--text {
  font-size: 7px;
}

.frame--phone .stat__form {
  padding-right: 0;
  margin-right: -4px;
  gap: 3px;
}

.frame--phone .stat__field {
  padding-right: 10px;
}

.frame--phone .stat__field--select {
  padding: 0 4px 0 3px;
}

.frame--phone .stat__ok {
  width: 13px;
  height: 14px;
}

.frame--phone .controls {
  margin: 9.5px auto 0;
  flex-direction: column-reverse;
  align-items: center;
  gap: 7px;
}

.frame--phone .modes {
  flex-direction: column;
  gap: 7px;
}

.frame--phone .mode:first-child {
  order: 3;
}

.frame--phone .mode:last-child {
  order: 1;
}

.frame--phone .mode--on {
  order: 2;
}

.frame--phone .house {
  margin: 8px 0 0 12px;
  width: 77px;
  height: 397px;
  flex-direction: column;
}

.frame--phone .yard {
  flex: none;
  height: 205px;
  padding: 35px 0 0 5px;
  background-color: #98f293;
}

.frame--phone .plan {
  grid-template-columns: 24px 21.6px 23.4px;
  grid-template-rows: 53.5px 40.5px 12px 11px;
}

.frame--phone .room {
  font-size: 4.5px;
}

.frame--phone .room--dining .room__name,
.frame--phone .room--hall .room__name {
  width: 11px;
}

.frame--phone .room--three .room__name {
  width: 13px;
  margin: -16px 0 0 -4px;
}

.frame--phone .room--hall .room__name {
  margin-top: 0;
}

.frame--phone .room--dining .room__name {
  margin-top: -26px;
}

.frame--phone .room--kitchen {
  grid-row: 1 / 4;
}

.frame--phone .legend {
  padding: 16px 3px 0 5px;
  font-size: 6.2px;
}

.frame--phone .legend__floor {
  width: 56px;
  height: 12px;
  line-height: 12px;
  margin: 0 0 8px 6px;
}

.frame--phone .legend__item {
  padding-left: 1px;
  gap: 1px;
  line-height: 8px;
}

.frame--phone .legend__item:nth-child(1) { height: 30px; }
.frame--phone .legend__item:nth-child(2) { height: 24px; }
.frame--phone .legend__item:nth-child(3) { height: 28px; white-space: normal; }
.frame--phone .legend__item:nth-child(4) { height: 21px; }
.frame--phone .legend__item:nth-child(5) { height: 24px; }

.frame--phone .pin--blind-a { left: 7px; top: 54px; }
.frame--phone .pin--blind-b { left: 7px; top: 118px; }
.frame--phone .pin--blind-c { left: 16px; top: 138px; }
.frame--phone .pin--tv { left: 5.5px; top: 94px; }
.frame--phone .pin--spot { left: 35px; top: 72px; }
.frame--phone .pin--bulb { left: 60.5px; top: 70.5px; }
.frame--phone .pin--drop { left: 62.5px; top: 44px; }

.frame--phone .brand {
  height: 44px;
  padding-right: 0;
}

.frame--phone .brand__logo {
  width: 33px;
  height: 34px;
}

/* mask group */
.frame--mask .app-nav {
  margin: 26px 30px 0 36px;
}

.frame--mask .stats {
  margin: 34px 0 0 34px;
  column-gap: 21.5px;
}

.frame--mask .controls {
  margin: 24px 38px 0 36px;
}

.frame--mask .house {
  margin: 8px 36px 0 34px;
  height: 121px;
  border-radius: 10px 10px 0 0;
}

.frame--mask .yard {
  padding: 35px 0 0 16px;
}

.frame--mask .plan {
  grid-template-columns: 92.5px 85.5px 90px;
  grid-template-rows: 53px 53px 50px;
}

.frame--mask .legend {
  width: 104px;
  padding: 21.7px 4px 0 6px;
}

.frame--mask .legend__floor {
  width: 80px;
  margin: 0 0 18.5px 7px;
}

.frame--mask .legend__item {
  padding-left: 6px;
  gap: 5.5px;
}

.frame--mask .pin--spot { left: 116px; top: 71px; }

/* inspector */
.inspector {
  width: 301px;
  flex-shrink: 0;
  background-color: #2c2c2c;
  border-left: 1px solid #444;
  color: #a8a8a8;
  font-weight: 600;
}

.inspector__tabs {
  height: 50px;
  display: flex;
  align-items: center;
  gap: 20px;
  padding-left: 20px;
  border-bottom: 1px solid #444;
}

.inspector__tab {
  font-weight: 400;
}

.inspector__tab--on {
  color: #f0f0f0;
  font-weight: 600;
}

.inspector__page {
  height: 101px;
  padding: 20px 0 0 20px;
  border-bottom: 1px solid #444;
}

.inspector__title {
  color: #efefef;
  font-size: 14px;
  font-weight: 600;
  line-height: 20px;
}

.inspector__fill {
  margin-top: 20px;
  display: flex;
  align-items: center;
  color: #dcdcdc;
  font-weight: 400;
}

.swatch {
  width: 20px;
  height: 20px;
  background-color: #1e1e1e;
  border: 1px solid #3a3a3a;
}

.inspector__hex {
  margin-left: 10px;
  width: 90px;
}

.inspector__eye {
  margin-left: 83px;
  width: 17px;
  height: 12px;
  color: #e6e6e6;
}

.inspector__row {
  height: 61px;
  padding: 0 21px 0 20px;
  display: flex;
  align-items: center;
  justify-content: space-between;
  border-bottom: 1px solid #444;
}

.inspector__icon {
  width: 16px;
  height: 16px;
  color: #bdbdbd;
}

/* floating help, over the inspector */
.help {
  position: absolute;
  left: 2111px;
  top: 1224px;
  width: 38px;
  height: 38px;
  border-radius: 50%;
  background-color: #1e1e1e;
  color: #ddd;
  font-size: 16px;
}
```
